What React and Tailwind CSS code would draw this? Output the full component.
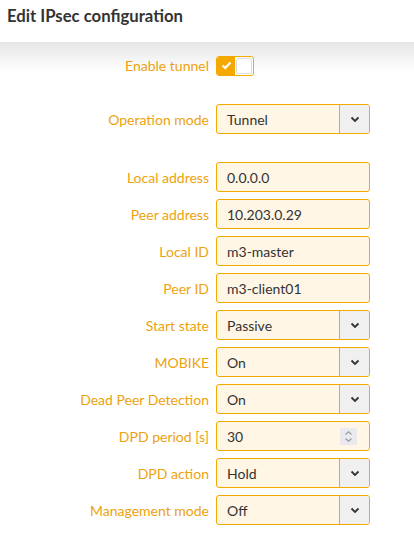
import React from "react";

const ORANGE_TEXT = "text-[#eda20c]";

function Chevron() {
  return (
    <svg width="10" height="7" viewBox="0 0 10 7" className="block">
      <path d="M1.5 1.5 L5 5 L8.5 1.5" fill="none" stroke="#333" strokeWidth="1.8" />
    </svg>
  );
}

function Label({ children }) {
  return (
    <div className={`w-[209px] text-right text-[14px] ${ORANGE_TEXT} pr-0`}>{children}</div>
  );
}

function TextInput({ value }) {
  return (
    <div className="w-[154px] h-[30px] border border-[#f2a900] rounded-[3px] bg-[#fff6e6] flex items-center pl-[10px] text-[14px] text-[#333]">
      {value}
    </div>
  );
}

function Select({ value }) {
  return (
    <div className="w-[154px] h-[30px] border border-[#f2a900] rounded-[3px] bg-[#fff6e6] flex items-stretch text-[14px] text-[#333] overflow-hidden">
      <div className="flex-1 flex items-center pl-[10px]">{value}</div>
      <div className="w-[30px] border-l border-[#f2a900] bg-[#f0f0f0] flex items-center justify-center">
        <Chevron />
      </div>
    </div>
  );
}

function NumberInput({ value }) {
  return (
    <div className="w-[154px] h-[30px] border border-[#f2a900] rounded-[3px] bg-[#fff6e6] flex items-center justify-between pl-[10px] pr-[12px] text-[14px] text-[#333]">
      <span>{value}</span>
      <div className="w-[17px] h-[17px] bg-[#e9e9ee] flex items-center justify-center">
        <svg width="9" height="13" viewBox="0 0 9 13">
          <path d="M1.5 4.5 L4.5 1.8 L7.5 4.5" fill="none" stroke="#9a9aa4" strokeWidth="1.2" />
          <path d="M1.5 8.5 L4.5 11.2 L7.5 8.5" fill="none" stroke="#9a9aa4" strokeWidth="1.2" />
        </svg>
      </div>
    </div>
  );
}

function Row({ label, children, className = "" }) {
  return (
    <div className={`flex items-center gap-[7px] ${className}`}>
      <Label>{label}</Label>
      {children}
    </div>
  );
}

export default function App() {
  return (
    <div className="w-[414px] h-[541px] bg-white overflow-hidden" style={{ fontFamily: "Lato, 'Open Sans', sans-serif" }}>
      <div className="h-[42px] flex items-center pl-[7px] pb-[8px]">
        <h1 className="text-[16.7px] font-bold text-[#333]">Edit IPsec configuration</h1>
      </div>
      <div className="bg-gradient-to-b from-[#e6e6e6] to-white to-[30px] pt-[13px]">
        <Row label="Enable tunnel">
          <div className="w-[38px] h-[20px] border border-[#f2a900] rounded-[3px] flex overflow-hidden bg-white">
            <div className="w-[18px] bg-[#f5a800] flex items-center justify-center">
              <svg width="11" height="9" viewBox="0 0 11 9">
                <path d="M1.5 4.5 L4.2 7 L9.5 1.5" fill="none" stroke="white" strokeWidth="2.2" />
              </svg>
            </div>
            <div className="flex-1 p-[1px]">
              <div className="w-full h-full border border-[#dcdcdc] rounded-[2px] bg-white" />
            </div>
          </div>
        </Row>
        <Row label="Operation mode" className="mt-[28px]">
          <Select value="Tunnel" />
        </Row>
        <div className="mt-[28px] flex flex-col gap-[7px]">
          <Row label="Local address"><TextInput value="0.0.0.0" /></Row>
          <Row label="Peer address"><TextInput value="10.203.0.29" /></Row>
          <Row label="Local ID"><TextInput value="m3-master" /></Row>
          <Row label="Peer ID"><TextInput value="m3-client01" /></Row>
          <Row label="Start state"><Select value="Passive" /></Row>
          <Row label="MOBIKE"><Select value="On" /></Row>
          <Row label="Dead Peer Detection"><Select value="On" /></Row>
          <Row label="DPD period [s]"><NumberInput value="30" /></Row>
          <Row label="DPD action"><Select value="Hold" /></Row>
          <Row label="Management mode"><Select value="Off" /></Row>
        </div>
      </div>
    </div>
  );
}
